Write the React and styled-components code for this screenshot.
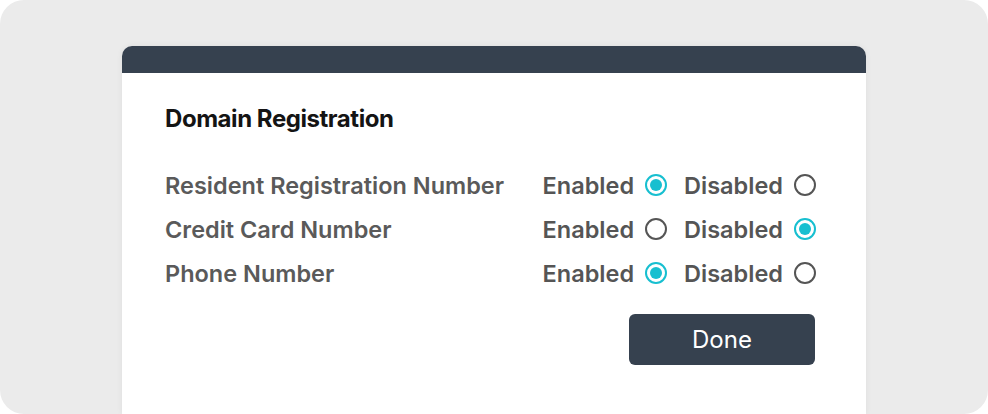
import React, { useState } from 'react';
import styled, { createGlobalStyle, css } from 'styled-components';

const GlobalStyle = createGlobalStyle`
  html, body {
    margin: 0;
    padding: 0;
    background: #ffffff;
  }
  body {
    font-family: Inter, "Noto Sans", sans-serif;
  }
`;

const Frame = styled.div`
  width: 988px;
  height: 414px;
  box-sizing: border-box;
  background: #ebebeb;
  border-radius: 24px;
  padding: 46px 0 0 122px;
  overflow: hidden;
`;

const Card = styled.div`
  width: 744px;
  height: 368px;
  background: #ffffff;
  border-radius: 10px 10px 0 0;
  box-shadow: 0 0 6px rgba(0, 0, 0, 0.06);
  display: flex;
  flex-direction: column;
`;

const CardHeader = styled.div`
  height: 27px;
  background: #36414f;
  border-radius: 10px 10px 0 0;
`;

const CardBody = styled.div`
  padding: 31px 50px 0 43px;
  display: flex;
  flex-direction: column;
`;

const Title = styled.h2`
  margin: 0 0 30px 0;
  font-size: 24px;
  line-height: 29px;
  font-weight: 700;
  letter-spacing: -0.45px;
  color: #141414;
`;

const Row = styled.div`
  height: 44px;
  display: flex;
  align-items: center;
  justify-content: space-between;
`;

const Label = styled.span`
  font-size: 23.5px;
  line-height: 29px;
  font-weight: 600;
  color: #5a5a5a;
`;

const Options = styled.div`
  display: flex;
  align-items: center;
  gap: 17px;
`;

const Option = styled.label`
  display: flex;
  align-items: center;
  gap: 11px;
  font-size: 23.5px;
  line-height: 29px;
  font-weight: 600;
  color: #555555;
  cursor: pointer;
`;

const Radio = styled.span`
  width: 22px;
  height: 22px;
  box-sizing: border-box;
  border-radius: 50%;
  border: 2px solid #555555;
  display: flex;
  align-items: center;
  justify-content: center;
  ${props => props.checked && css`
    border: 2.5px solid #17bfd0;
    &::after {
      content: '';
      width: 12px;
      height: 12px;
      border-radius: 50%;
      background: #17bfd0;
    }
  `}
`;

const Footer = styled.div`
  display: flex;
  justify-content: flex-end;
  margin-top: 19px;
  padding-right: 1px;
`;

const Button = styled.button`
  width: 186px;
  height: 51px;
  border: none;
  border-radius: 6px;
  background: #36414f;
  color: #ffffff;
  font-family: Inter, "Noto Sans", sans-serif;
  font-size: 24px;
  font-weight: 400;
  cursor: pointer;
`;

const fields = [
  { name: 'Resident Registration Number', value: true },
  { name: 'Credit Card Number', value: false },
  { name: 'Phone Number', value: true },
];

export default function App() {
  const [values, setValues] = useState(fields.map(f => f.value));

  const setValue = (i, v) => {
    setValues(values.map((old, j) => (j === i ? v : old)));
  };

  return (
    <>
      <GlobalStyle />
      <Frame>
        <Card>
          <CardHeader />
          <CardBody>
            <Title>Domain Registration</Title>
            {fields.map((f, i) => (
              <Row key={f.name}>
                <Label>{f.name}</Label>
                <Options>
                  <Option onClick={() => setValue(i, true)}>
                    Enabled <Radio checked={values[i]} />
                  </Option>
                  <Option onClick={() => setValue(i, false)}>
                    Disabled <Radio checked={!values[i]} />
                  </Option>
                </Options>
              </Row>
            ))}
            <Footer>
              <Button>Done</Button>
            </Footer>
          </CardBody>
        </Card>
      </Frame>
    </>
  );
}
